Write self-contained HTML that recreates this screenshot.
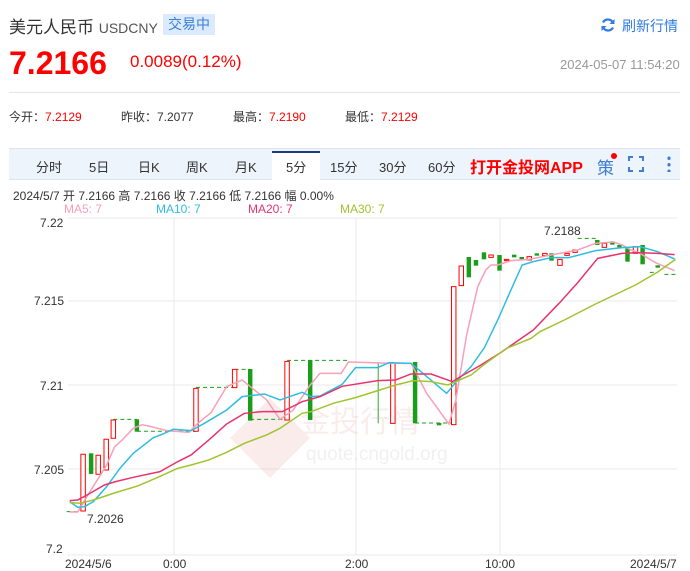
<!DOCTYPE html>
<html><head><meta charset="utf-8"><style>
*{margin:0;padding:0;box-sizing:border-box}
body{width:690px;height:571px;background:#fff;font-family:"Liberation Sans","Noto Sans CJK SC",sans-serif;position:relative;overflow:hidden;color:#333}
.a{position:absolute;white-space:nowrap}
</style></head><body>
<div class="a" style="left:9px;top:13px;font-size:17px;color:#333">美元人民币 <span style="font-size:14px;color:#555">USDCNY</span></div>
<div class="a" style="left:163px;top:14px;width:52px;height:21px;background:#dbeafd;color:#3a7fd5;font-size:14px;line-height:21px;text-align:center">交易中</div>
<svg class="a" style="left:600px;top:17px" width="16" height="16" viewBox="0 0 16 16"><path d="M13 6A5.5 5.5 0 0 0 3 5.5M3 10a5.5 5.5 0 0 0 10 .5" fill="none" stroke="#2f7be0" stroke-width="2.2"/><path d="M14.5 2v5h-5z M1.5 14V9h5z" fill="#2f7be0"/></svg>
<div class="a" style="left:622px;top:16px;font-size:14px;color:#2f7be0">刷新行情</div>
<div class="a" style="left:9px;top:45px;font-size:32px;font-weight:bold;color:#f00">7.2166</div>
<div class="a" style="left:130px;top:52px;font-size:17px;color:#f00">0.0089(0.12%)</div>
<div class="a" style="left:560px;top:57px;font-size:13px;color:#999">2024-05-07 11:54:20</div>
<div class="a" style="left:9px;top:92px;width:671px;height:1px;background:#e6e6e6"></div>
<div class="a" style="left:9px;top:108px;font-size:12px;color:#333">今开：<span style="color:#f00">7.2129</span></div>
<div class="a" style="left:121px;top:108px;font-size:12px;color:#333">昨收：7.2077</div>
<div class="a" style="left:233px;top:108px;font-size:12px;color:#333">最高：<span style="color:#f00">7.2190</span></div>
<div class="a" style="left:345px;top:108px;font-size:12px;color:#333">最低：<span style="color:#f00">7.2129</span></div>
<div class="a" style="left:9px;top:148px;width:671px;height:32px;background:#eef4fc;border-top:1px solid #dbe5f1;border-bottom:1px solid #dbe5f1"></div>
<div class="a" style="left:272px;top:151px;width:48px;height:29px;background:#fff;border-top:2px solid #1d3a84"></div>
<div class="a" style="top:157px;left:0;font-size:13px;color:#333;width:690px">
<span class="a" style="left:36px">分时</span><span class="a" style="left:89px">5日</span><span class="a" style="left:138px">日K</span><span class="a" style="left:186px">周K</span><span class="a" style="left:235px">月K</span><span class="a" style="left:286px">5分</span><span class="a" style="left:330px">15分</span><span class="a" style="left:379px">30分</span><span class="a" style="left:428px">60分</span></div>
<div class="a" style="left:470px;top:154px;font-size:16px;font-weight:bold;color:#f00">打开金投网APP</div>
<div class="a" style="left:597px;top:154px;font-size:17px;color:#3f7ed0">策</div>
<div class="a" style="left:611px;top:153px;width:6px;height:6px;border-radius:50%;background:#f00"></div>
<svg class="a" style="left:628px;top:156px" width="16" height="16"><path d="M1 5V1h4M11 1h4v4M15 11v4h-4M5 15H1v-4" fill="none" stroke="#3f7ed0" stroke-width="2"/></svg>
<div class="a" style="left:667px;top:155px;width:4px;height:17px;background:radial-gradient(circle,#3f7ed0 1.6px,transparent 1.8px) 0 0/4px 6.5px repeat-y"></div>
<div class="a" style="left:13px;top:187px;font-size:12px;color:#333">2024/5/7 开 7.2166 高 7.2166 收 7.2166 低 7.2166 幅 0.00%</div>
<div class="a" style="top:202px;font-size:12px;left:0;width:690px"><span class="a" style="left:64px;color:#f7a0b8">MA5: 7</span><span class="a" style="left:156px;color:#2ebde0">MA10: 7</span><span class="a" style="left:248px;color:#e8336e">MA20: 7</span><span class="a" style="left:340px;color:#9fc42e">MA30: 7</span></div>
<svg class="a" style="left:0;top:0" width="690" height="571">
<g stroke="#eaeaea" stroke-width="1"><line x1="68" y1="218" x2="677" y2="218"/><line x1="68" y1="301" x2="677" y2="301"/><line x1="68" y1="385" x2="677" y2="385"/><line x1="68" y1="469" x2="677" y2="469"/><line x1="68" y1="555" x2="677" y2="555"/><line x1="174" y1="218" x2="174" y2="555"/><line x1="356" y1="218" x2="356" y2="555"/><line x1="500" y1="218" x2="500" y2="555"/></g>
<g font-size="12" fill="#333" font-family="Liberation Sans"><text x="40" y="227">7.22</text><text x="34" y="305">7.215</text><text x="40" y="390">7.21</text><text x="34" y="474">7.205</text><text x="46" y="553">7.2</text>
<text x="65" y="568">2024/5/6</text><text x="163" y="568">0:00</text><text x="345" y="568">2:00</text><text x="485" y="568">10:00</text><text x="630" y="568">2024/5/7</text>
<text x="87" y="523">7.2026</text><text x="544" y="235">7.2188</text></g>
<g opacity="0.1"><path d="M270 398l40 40-40 40-40-40z" fill="#d9533f"/><text x="300" y="432" font-size="30" fill="#d9533f" font-family="Noto Sans CJK SC">金投行情</text><text x="306" y="460" font-size="19" fill="#777" font-family="Liberation Sans">quote.cngold.org</text></g>
<g transform="translate(0,220) scale(0.4444,0.3333)">
<g fill="none" stroke="#1a9e1a" stroke-width="1" stroke-dasharray="4,3" vector-effect="non-scaling-stroke">
<path d="M255 598H308M308 634H441M441 502H528M528 448H563M563 598H646M646 421H784M934 609H1021M150 875H180M1300 55H1344M1462 157H1480M1495 163H1520" vector-effect="non-scaling-stroke"/></g>
<g fill="#1a9e1a">
<rect x="200" y="700" width="10" height="62"/><rect x="303" y="598" width="10" height="37"/><rect x="558" y="447" width="10" height="155"/><rect x="693" y="420" width="10" height="180"/><rect x="850" y="430" width="2" height="180"/><rect x="929" y="426" width="10" height="184"/><rect x="983" y="609" width="10" height="7"/><rect x="1050" y="111" width="10" height="61"/><rect x="1066" y="120" width="10" height="17"/><rect x="1084" y="97" width="10" height="21"/><rect x="1119" y="105" width="10" height="47"/><rect x="1152" y="104" width="10" height="8"/><rect x="1169" y="111" width="10" height="7"/><rect x="1203" y="100" width="10" height="7"/><rect x="1236" y="100" width="10" height="22"/><rect x="1339" y="60" width="10" height="15"/><rect x="1373" y="64" width="10" height="10"/><rect x="1389" y="75" width="10" height="8"/><rect x="1407" y="85" width="10" height="40"/><rect x="1441" y="75" width="10" height="58"/><rect x="1475" y="136" width="10" height="7"/></g>
<g fill="#fff" stroke="#f00" stroke-width="1" vector-effect="non-scaling-stroke">
<rect x="182" y="703" width="10" height="170" vector-effect="non-scaling-stroke"/><rect x="216" y="706" width="10" height="57" vector-effect="non-scaling-stroke"/><rect x="234" y="658" width="10" height="92" vector-effect="non-scaling-stroke"/><rect x="250" y="600" width="10" height="55" vector-effect="non-scaling-stroke"/><rect x="436" y="505" width="10" height="129" vector-effect="non-scaling-stroke"/><rect x="523" y="448" width="10" height="55" vector-effect="non-scaling-stroke"/><rect x="641" y="424" width="10" height="176" vector-effect="non-scaling-stroke"/><rect x="879" y="430" width="10" height="180" vector-effect="non-scaling-stroke"/><rect x="1016" y="200" width="10" height="414" vector-effect="non-scaling-stroke"/><rect x="1033" y="138" width="10" height="59" vector-effect="non-scaling-stroke"/><rect x="1100" y="105" width="10" height="7" vector-effect="non-scaling-stroke"/><rect x="1135" y="118" width="10" height="4" vector-effect="non-scaling-stroke"/><rect x="1186" y="110" width="10" height="10" vector-effect="non-scaling-stroke"/><rect x="1221" y="100" width="10" height="7" vector-effect="non-scaling-stroke"/><rect x="1255" y="118" width="10" height="18" vector-effect="non-scaling-stroke"/><rect x="1271" y="100" width="10" height="6" vector-effect="non-scaling-stroke"/><rect x="1289" y="90" width="10" height="7" vector-effect="non-scaling-stroke"/><rect x="1355" y="70" width="10" height="12" vector-effect="non-scaling-stroke"/><rect x="1425" y="80" width="10" height="20" vector-effect="non-scaling-stroke"/></g>
<g fill="none" stroke-width="1.5">
<polyline vector-effect="non-scaling-stroke" stroke="#f7a0b8" points="157,876 175,876 200,820 240,735 258,680 275,660 300,625 320,614 340,620 375,632 425,637 445,610 475,578 510,500 545,480 600,540 630,598 660,570 698,495 720,460 768,460 784,426 880,430 925,430 960,520 1010,612 1025,545 1050,345 1075,200 1093,150 1105,135 1120,135 1150,122 1190,118 1240,105 1300,90 1340,70 1380,66 1400,75 1420,90 1440,100 1475,128 1518,152"/>
<polyline vector-effect="non-scaling-stroke" stroke="#2ebde0" points="157,845 175,862 190,860 210,845 240,800 270,745 300,700 345,653 365,643 390,628 430,632 460,610 510,570 545,530 595,522 630,540 680,517 700,530 720,528 770,493 800,443 850,443 875,428 925,430 965,475 1005,520 1030,480 1060,440 1090,383 1120,300 1148,215 1175,135 1200,125 1240,113 1280,113 1340,92 1400,83 1440,80 1480,95 1518,117"/>
<polyline vector-effect="non-scaling-stroke" stroke="#e8336e" points="157,842 175,840 200,822 235,795 260,785 300,772 360,755 400,725 430,705 470,660 510,612 550,580 590,575 635,575 680,545 720,530 770,499 850,482 890,480 925,462 970,462 1018,485 1040,467 1080,437 1130,395 1200,330 1258,250 1300,188 1345,115 1400,100 1440,98 1480,100 1518,104"/>
<polyline vector-effect="non-scaling-stroke" stroke="#9fc42e" points="157,848 180,850 210,840 260,818 310,798 350,775 400,745 430,735 470,720 510,697 550,670 600,645 630,625 680,580 700,575 750,550 800,533 850,512 890,495 930,482 970,485 1008,495 1060,465 1090,433 1140,385 1195,355 1215,335 1270,300 1340,252 1430,195 1480,156 1520,118"/>
</g></g></svg>
</body></html>
